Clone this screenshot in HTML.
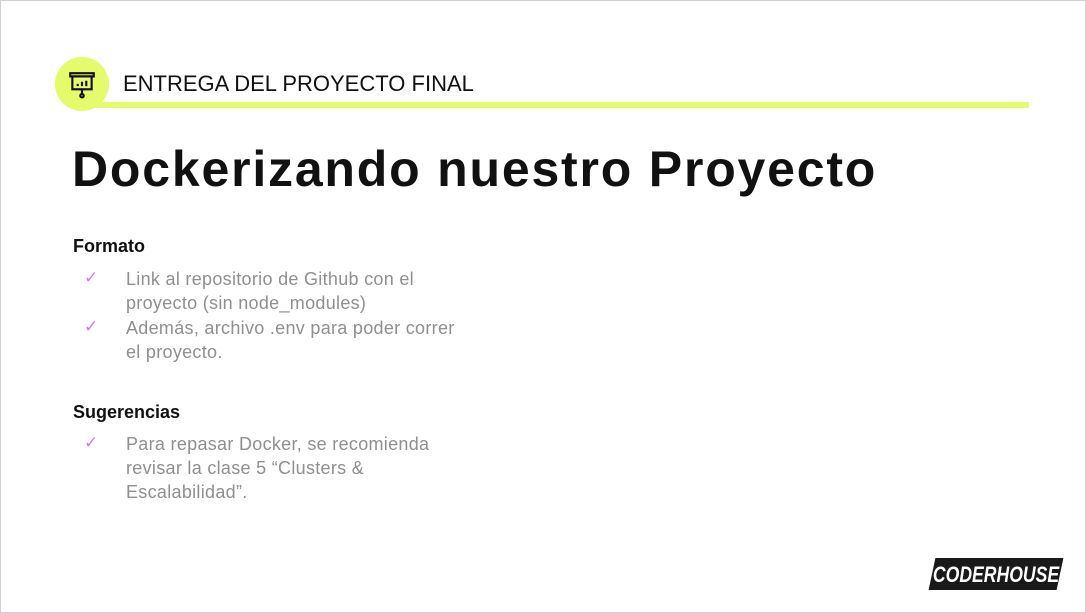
<!DOCTYPE html>
<html><head><style>
body{margin:0;width:1086px;height:613px;background:#fff;position:relative;overflow:hidden;font-family:"Liberation Sans",sans-serif}
.frame{position:absolute;left:0;top:0;width:1084px;height:611px;border:1px solid #d0d0d0}
.circ{position:absolute;left:55px;top:57px;width:54px;height:54px;border-radius:50%;background:#e6fb6a}
.line{position:absolute;left:95px;top:102px;width:934px;height:6px;background:#e6fb6a}
.hdr{position:absolute;left:123px;top:71px;font-size:22px;color:#111}
h1{position:absolute;left:72px;top:140px;margin:0;font-size:50px;font-weight:bold;color:#111;letter-spacing:1.8px}
.sec{position:absolute;left:73px;font-size:18px;font-weight:bold;color:#111}
.it{position:absolute;left:126px;font-size:18px;line-height:24px;color:#8f8f8f;width:345px;letter-spacing:0.3px}
.ck{position:absolute;left:84px;font-size:17px;color:#d77be0}
.logo{position:absolute;left:932px;top:558px;width:128px;height:32px;background:#1a1a1a;transform:skewX(-12deg)}
.logot{position:absolute;left:896px;top:562px;width:200px;text-align:center;color:#fff;font-size:22px;font-weight:bold;font-style:italic;white-space:nowrap;transform:scaleX(0.8)}
</style></head><body>
<div class="frame"></div>
<div class="line"></div>
<div class="circ"></div>
<svg style="position:absolute;left:67px;top:70px" width="30" height="30" viewBox="0 0 28 28" fill="none" stroke="#111" stroke-width="2">
<rect x="3" y="3" width="22" height="3"/><rect x="5" y="6" width="18" height="12"/>
<path d="M10 15v-2M14 15v-4M18 15v-5M14 18v4"/><circle cx="14" cy="24" r="1.6"/></svg>
<div class="hdr">ENTREGA DEL PROYECTO FINAL</div>
<h1>Dockerizando nuestro Proyecto</h1>
<div class="sec" style="top:236px">Formato</div>
<div class="ck" style="top:268px">✓</div>
<div class="it" style="top:267px">Link al repositorio de Github con el proyecto (sin node_modules)</div>
<div class="ck" style="top:317px">✓</div>
<div class="it" style="top:316px">Además, archivo .env para poder correr el proyecto.</div>
<div class="sec" style="top:402px">Sugerencias</div>
<div class="ck" style="top:433px">✓</div>
<div class="it" style="top:432px">Para repasar Docker, se recomienda revisar la clase 5 “Clusters &amp; Escalabilidad”.</div>
<div class="logo"></div>
<div class="logot">CODERHOUSE</div>
</body></html>
